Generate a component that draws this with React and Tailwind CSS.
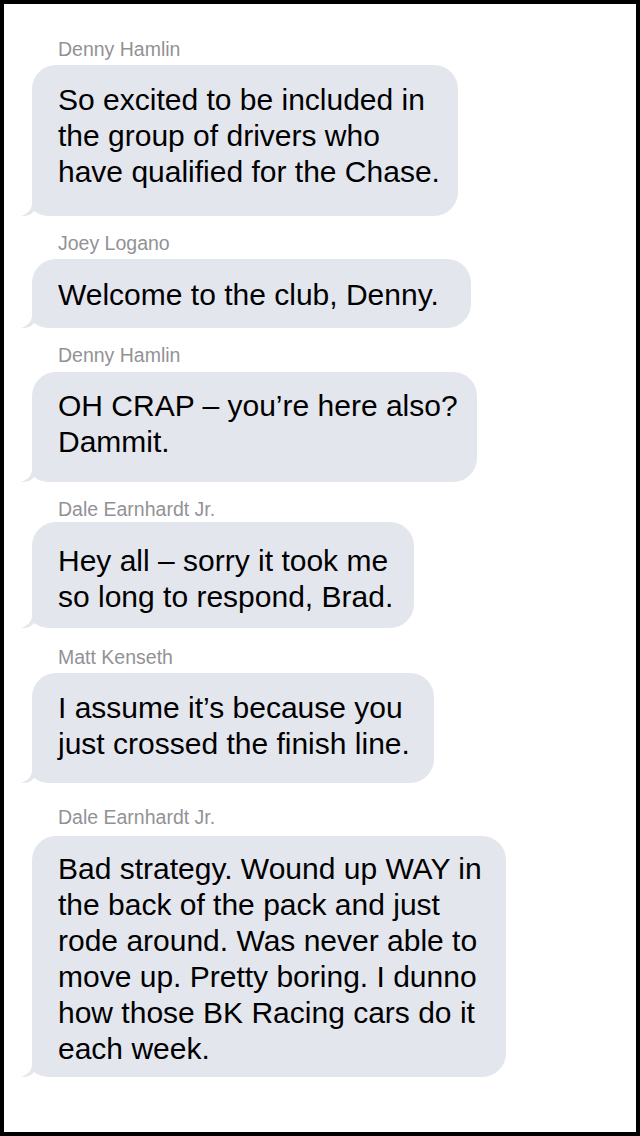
import React from "react";

const messages = [
  {
    name: "Denny Hamlin",
    lines: ["So excited to be included in", "the group of drivers who", "have qualified for the Chase."],
    wrap: "mt-[35px]",
    gap: "mt-[6px]",
    bubble: "w-[426px] pt-[17px] pb-[26px]",
  },
  {
    name: "Joey Logano",
    lines: ["Welcome to the club, Denny."],
    wrap: "mt-[17px]",
    gap: "mt-[6px]",
    bubble: "w-[439px] pt-[18px] pb-[15px]",
  },
  {
    name: "Denny Hamlin",
    lines: ["OH CRAP \u2013 you\u2019re here also?", "Dammit."],
    wrap: "mt-[17px]",
    gap: "mt-[7px]",
    bubble: "w-[445px] pt-[16px] pb-[22px]",
  },
  {
    name: "Dale Earnhardt Jr.",
    lines: ["Hey all \u2013 sorry it took me", "so long to respond, Brad."],
    wrap: "mt-[17px]",
    gap: "mt-[3px]",
    bubble: "w-[382px] pt-[21px] pb-[13px]",
  },
  {
    name: "Matt Kenseth",
    lines: ["I assume it\u2019s because you", "just crossed the finish line."],
    wrap: "mt-[19px]",
    gap: "mt-[6px]",
    bubble: "w-[402px] pt-[17px] pb-[21px]",
  },
  {
    name: "Dale Earnhardt Jr.",
    lines: [
      "Bad strategy. Wound up WAY in",
      "the back of the pack and just",
      "rode around. Was never able to",
      "move up. Pretty boring. I dunno",
      "how those BK Racing cars do it",
      "each week.",
    ],
    wrap: "mt-[24px]",
    gap: "mt-[9px]",
    bubble: "w-[474px] pt-[15px] pb-[10px]",
  },
];

function Tail() {
  return (
    <svg
      className="absolute left-[-11px] bottom-0"
      width="36"
      height="26"
      viewBox="0 0 36 26"
    >
      <path
        d="M11 0 L11 13 C11 20 6 24 0 26 C7 26 11 24 13 21 C17 24 23 26 30 26 L36 26 L36 0 Z"
        fill="#e4e6ee"
      />
    </svg>
  );
}

export default function App() {
  return (
    <div
      className="w-[640px] h-[1136px] border-4 border-black bg-white box-border overflow-hidden"
      style={{ fontFamily: '"Liberation Sans", Arial, sans-serif' }}
    >
      <div className="flex flex-col">
        {messages.map((m, i) => (
          <div key={i} className={m.wrap}>
            <div className="pl-[54px] h-[20px] text-[19.5px] leading-[20px] text-[#929296]">
              {m.name}
            </div>
            <div className={m.gap + " pl-[28px]"}>
              <div
                className={
                  "relative rounded-[24px] bg-[#e4e6ee] pl-[26px] text-[30px] leading-[36px] text-black " +
                  m.bubble
                }
              >
                <Tail />
                <div className="relative">
                  {m.lines.map((l, j) => (
                    <div key={j} className="whitespace-nowrap">
                      {l}
                    </div>
                  ))}
                </div>
              </div>
            </div>
          </div>
        ))}
      </div>
    </div>
  );
}
